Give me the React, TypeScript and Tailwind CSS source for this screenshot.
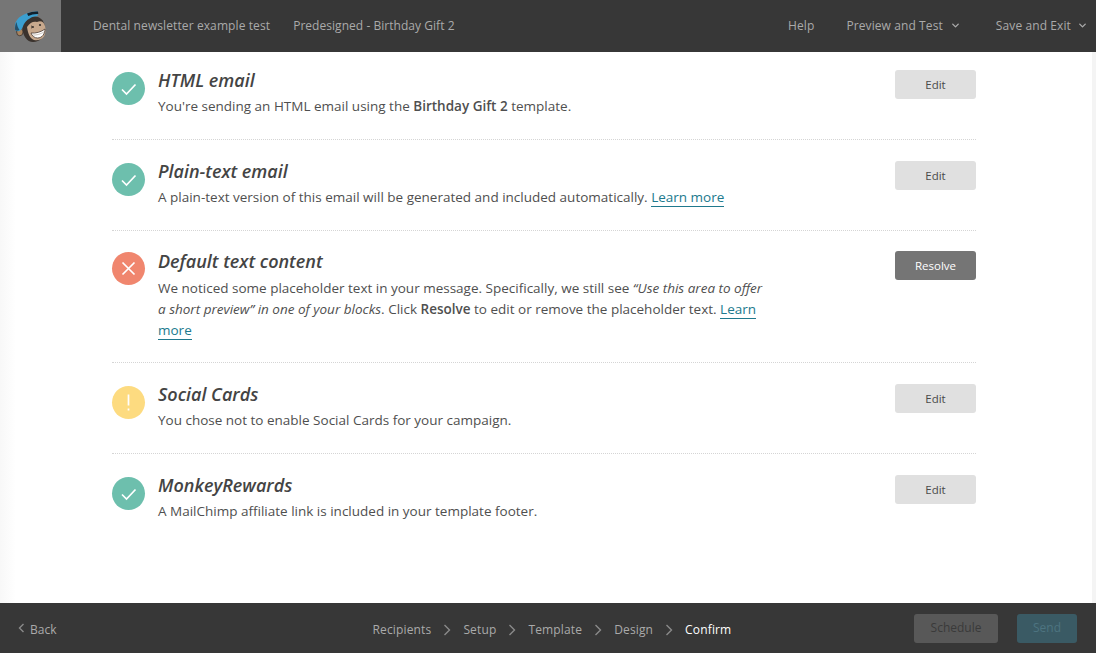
import { ChevronDown } from 'lucide-react';
import type { ReactNode } from 'react';

type Status = 'ok' | 'error' | 'warn';

interface Item {
  title: string;
  status: Status;
  action: string;
  body: ReactNode;
}

function LearnLink({ children }: { children: ReactNode }) {
  return <a className="text-[#20798d] border-b border-[#20798d]">{children}</a>;
}

const items: Item[] = [
  {
    title: 'HTML email',
    status: 'ok',
    action: 'Edit',
    body: (
      <>
        You're sending an HTML email using the <b className="font-semibold">Birthday Gift 2</b> template.
      </>
    ),
  },
  {
    title: 'Plain-text email',
    status: 'ok',
    action: 'Edit',
    body: (
      <>
        A plain-text version of this email will be generated and included automatically.{' '}
        <LearnLink>Learn more</LearnLink>
      </>
    ),
  },
  {
    title: 'Default text content',
    status: 'error',
    action: 'Resolve',
    body: (
      <>
        We noticed some placeholder text in your message. Specifically, we still see{' '}
        <i>“Use this area to offer a short preview” in one of your blocks</i>. Click{' '}
        <b className="font-semibold">Resolve</b> to edit or remove the placeholder text.{' '}
        <LearnLink>Learn more</LearnLink>
      </>
    ),
  },
  {
    title: 'Social Cards',
    status: 'warn',
    action: 'Edit',
    body: <>You chose not to enable Social Cards for your campaign.</>,
  },
  {
    title: 'MonkeyRewards',
    status: 'ok',
    action: 'Edit',
    body: <>A MailChimp affiliate link is included in your template footer.</>,
  },
];

function StatusIcon({ status }: { status: Status }) {
  const bg =
    status === 'ok' ? 'bg-[#6dbfad]' : status === 'error' ? 'bg-[#f0866e] -mt-[2px]' : 'bg-[#fddb80]';
  return (
    <div className={`w-[33px] h-[33px] rounded-full shrink-0 flex items-center justify-center ${bg}`}>
      <svg width="33" height="33" viewBox="0 0 33 33" fill="none" stroke="#fff" strokeWidth="1.7">
        {status === 'ok' && <path d="M10 17.5l4.500 4.500 9-9.500" />}
        {status === 'error' && <path d="M10.500 10.500l12 12M22.500 10.500l-12 12" />}
        {status === 'warn' && <path d="M16.500 8.500v11M16.500 22.500v2" />}
      </svg>
    </div>
  );
}

function MonkeyLogo() {
  return (
    <svg width="34" height="34" viewBox="0 0 34 34">
      {/* head */}
      <path d="M8 15c3-6 10-9 16-7 5 2 7 7 7 12 0 8-5 13-12 13-6 0-11-6-11-18z" fill="#3a322d" />
      {/* ear */}
      <ellipse cx="5.800" cy="23" rx="3.200" ry="3.800" fill="#a8835f" stroke="#3a322d" strokeWidth="0.8" />
      {/* face */}
      <path d="M13 18c3-5 7-6 10-5 4-2 7 0 8 4 1 4 .5 8-1 10.500-2 3-6 4.500-10 3.500-4-1.500-6-6-7-13z" fill="#c8a98d" />
      {/* grin */}
      <path d="M17 24c5 .5 10-1 14-4 0 5-3 9-7.500 9-3 0-5.500-2-6.500-5z" fill="#fff" stroke="#4a3b32" strokeWidth="0.8" />
      <path d="M19 26c4 .3 7.500-1 11-3" fill="none" stroke="#9a8a7c" strokeWidth="0.5" />
      {/* eyes */}
      <path d="M17 17l3 1-3 1" fill="none" stroke="#3a322d" strokeWidth="0.9" />
      <circle cx="26" cy="16" r="1.100" fill="#3a322d" />
      {/* cap */}
      <path d="M1 20C0 14 3 9 9 6c5-2.500 10-4 15-3.500l-.5 4.500c-6 .5-11 3.500-14 9-1 3-2 5-4 6-2 .5-4.500 0-4.500-2z" fill="#3b9fd0" />
      <path d="M1 20c0-3 .5-5 1.500-7 .5 3 1.500 6 3 8-2 1-4.500 1-4.500-1z" fill="#26506a" />
      <path d="M13 4.500c3.500-1.500 7.500-2.300 11-2l.3 2.500c-3.500-.2-7 .5-10 2z" fill="#13202b" />
    </svg>
  );
}

function Row({ item, first, last }: { item: Item; first: boolean; last: boolean }) {
  const isResolve = item.action === 'Resolve';
  return (
    <div
      className={`flex items-start ${first ? 'pt-5' : 'pt-[23px]'} ${
        last ? '' : 'border-b border-dotted border-[#d5d5d5]'
      } ${isResolve ? 'pb-[21px]' : 'pb-[22px]'}`}
    >
      <StatusIcon status={item.status} />
      <div className={`ml-[13px] w-[610px] ${isResolve ? '-mt-[5px]' : '-mt-1'}`}>
        <h3 className="text-[18px] leading-[24px] font-semibold italic text-[#444444]">{item.title}</h3>
        <p className={`text-[13.5px] leading-[21px] text-[#4f4f4f] ${isResolve ? 'mt-[5px]' : 'mt-1'}`}>
          {item.body}
        </p>
      </div>
      <button
        className={`ml-auto w-[81px] h-[29px] rounded-[3px] text-[11.5px] font-medium ${
          isResolve ? 'bg-[#757575] text-white -mt-[3px]' : 'bg-[#e0e0e0] text-[#4a4a4a] -mt-0.5'
        }`}
      >
        {item.action}
      </button>
    </div>
  );
}

function StepChevron() {
  return (
    <svg width="8" height="12" viewBox="0 0 8 12" fill="none" stroke="#8a8a8a" strokeWidth="1.4" className="mx-3">
      <path d="M1.500 1l5 5-5 5" />
    </svg>
  );
}

export default function App() {
  return (
    <div className="h-[653px] flex flex-col overflow-hidden bg-white font-['Open_Sans',sans-serif]">
      <header className="h-[52px] shrink-0 bg-[#373737] flex items-center text-[12px] tracking-[0.1px] text-[#aaaaaa]">
        <div className="w-[61px] h-full bg-[#767676] flex items-center justify-center">
          <MonkeyLogo />
        </div>
        <span className="ml-[32px] -mt-px">Dental newsletter example test</span>
        <span className="ml-[23px] -mt-px tracking-[0.04px]">Predesigned - Birthday Gift 2</span>
        <span className="ml-auto -mt-px">Help</span>
        <span className="ml-[32px] -mt-px flex items-center gap-[7px]">
          Preview and Test <ChevronDown size={11} strokeWidth={3} />
        </span>
        <span className="ml-[35px] mr-2 -mt-px flex items-center gap-[6px]">
          Save and Exit <ChevronDown size={11} strokeWidth={3} />
        </span>
      </header>

      <main className="flex-1 flex min-h-0">
        <div className="w-4 shrink-0 bg-gradient-to-r from-[#f8f8f8] to-white" />
        <div className="flex-1 pl-24 pr-[116px]">
          {items.map((item, i) => (
            <Row key={item.title} item={item} first={i === 0} last={i === items.length - 1} />
          ))}
        </div>
        <div className="w-1 shrink-0 bg-[#f4f4f4]" />
      </main>

      <footer className="h-[50px] shrink-0 bg-[#373737] flex items-center text-[12px] text-[#aaaaaa]">
        <span className="ml-[18px] flex items-center gap-[5px] mt-[3px]">
          <svg width="7" height="10" viewBox="0 0 7 10" fill="none" stroke="#8a8a8a" strokeWidth="1.4" className="-mt-1">
            <path d="M5.500 1l-4 4 4 4" />
          </svg>
          Back
        </span>
        <nav className="ml-[316px] flex items-center mt-[3px] tracking-[0.15px]">
          <span>Recipients</span>
          <StepChevron />
          <span>Setup</span>
          <StepChevron />
          <span>Template</span>
          <StepChevron />
          <span>Design</span>
          <StepChevron />
          <span className="text-white">Confirm</span>
        </nav>
        <button className="ml-auto w-[84px] h-[29px] rounded-[3px] bg-[#585858] text-[#3a3a3a] text-[12px] font-medium">
          Schedule
        </button>
        <button className="ml-[19px] mr-[19px] w-[60px] h-[29px] rounded-[3px] bg-[#3a5a64] text-[#4d7480] text-[12px] font-medium">
          Send
        </button>
      </footer>
    </div>
  );
}
